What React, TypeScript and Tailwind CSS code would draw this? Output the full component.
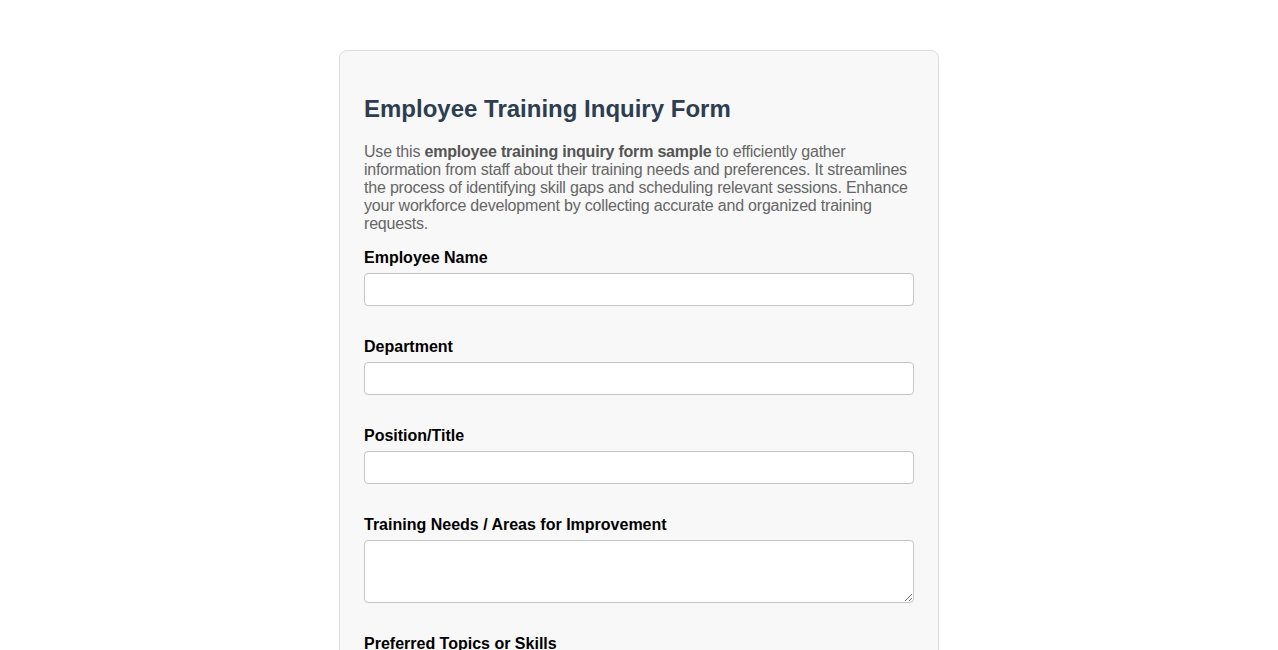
import React from "react";

const fields = [
  { id: "name", label: "Employee Name", type: "input" },
  { id: "department", label: "Department", type: "input" },
  { id: "position", label: "Position/Title", type: "input" },
  { id: "needs", label: "Training Needs / Areas for Improvement", type: "textarea" },
  { id: "topics", label: "Preferred Topics or Skills", type: "input" },
];

const App: React.FC = () => {
  return (
    <div className="min-h-screen bg-white font-['Liberation_Sans',Arial,sans-serif] pt-[50px]">
      <div className="mx-auto w-[600px] rounded-lg border border-[#dddddd] bg-[#f8f8f8] px-6 pb-6 pt-[44px]">
        <h2 className="text-[24px] font-bold leading-[27px] text-[#2c3e50]">
          Employee Training Inquiry Form
        </h2>
        <p className="mt-[21px] text-[16px] leading-[18px] tracking-[-0.2px] text-[#666666]">
          Use this <strong className="font-bold text-[#555555]">employee training inquiry form sample</strong> to
          efficiently gather information from staff about their training needs and preferences. It streamlines the
          process of identifying skill gaps and scheduling relevant sessions. Enhance your workforce development by
          collecting accurate and organized training requests.
        </p>

        <form className="mt-4 flex flex-col">
          {fields.map((f) => (
            <div key={f.id} className="mb-[32px] flex flex-col">
              <label htmlFor={f.id} className="mb-[6px] text-[16px] font-bold leading-[18px] text-black">
                {f.label}
              </label>
              {f.type === "textarea" ? (
                <textarea
                  id={f.id}
                  className="h-[63px] w-full resize-y rounded border border-[#c4c4c4] bg-white px-2 py-1 text-sm outline-none"
                />
              ) : (
                <input
                  id={f.id}
                  type="text"
                  className="h-[33px] w-full rounded border border-[#c4c4c4] bg-white px-2 text-sm outline-none"
                />
              )}
            </div>
          ))}
        </form>
      </div>
    </div>
  );
};

export default App;
